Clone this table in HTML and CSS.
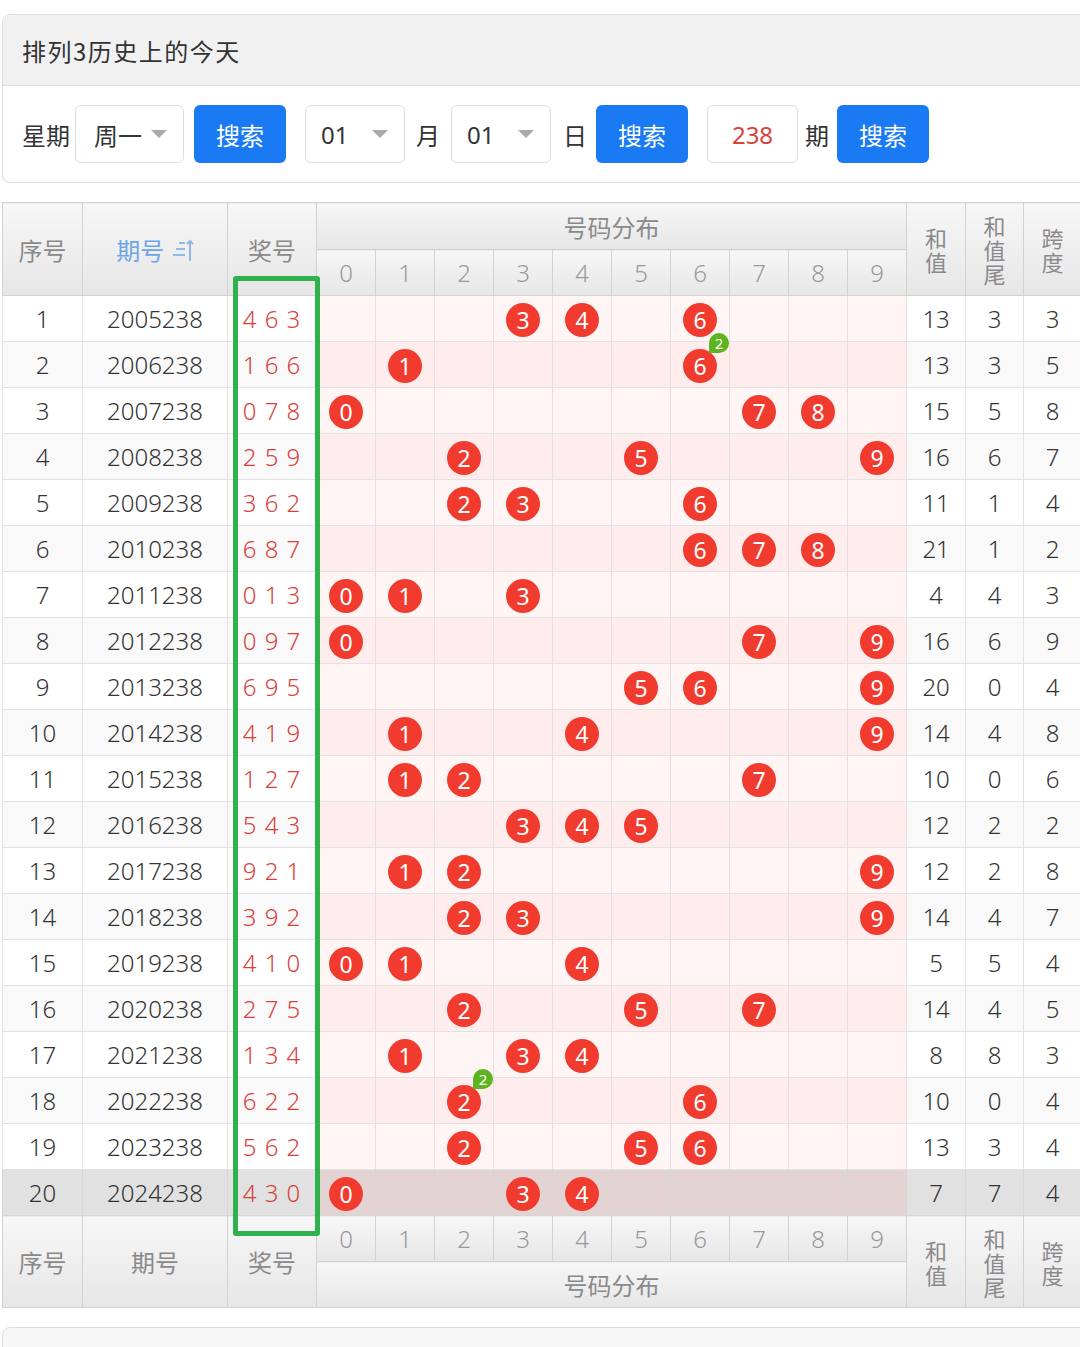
FILE: index.html
```html
<!DOCTYPE html>
<html lang="zh">
<head>
<meta charset="utf-8">
<title>排列3历史上的今天</title>
<link rel="stylesheet" href="styles.css">
</head>
<body>
<div class="page">
  <div class="card">
    <div class="card-head">排列3历史上的今天</div>
    <div class="card-body">
      <span class="lbl lbl-week">星期</span>
      <div class="sel sel-week"><span>周一</span><i class="caret"></i></div>
      <button class="btn btn-1">搜索</button>
      <div class="sel sel-num sel-month"><span>01</span><i class="caret"></i></div>
      <span class="lbl lbl-month">月</span>
      <div class="sel sel-num sel-day"><span>01</span><i class="caret"></i></div>
      <span class="lbl lbl-day">日</span>
      <button class="btn btn-2">搜索</button>
      <div class="inp">238</div>
      <span class="lbl lbl-qi">期</span>
      <button class="btn btn-3">搜索</button>
    </div>
  </div>

  <div class="tbl-wrap">
    <table class="tbl">
      <colgroup>
        <col class="c-idx"><col class="c-issue"><col class="c-win">
        <col class="c-d"><col class="c-d"><col class="c-d"><col class="c-d"><col class="c-d">
        <col class="c-d"><col class="c-d"><col class="c-d"><col class="c-d"><col class="c-d">
        <col class="c-sum"><col class="c-tail"><col class="c-span">
      </colgroup>
      <thead>
        <tr class="h1">
          <th rowspan="2">序号</th>
          <th rowspan="2" class="sortable">期号 <svg class="sort-ic" width="22" height="26" viewBox="0 0 22 26"><g stroke="#8cb9ec" stroke-width="2" fill="none"><line x1="7" y1="5" x2="13" y2="5"/><line x1="4" y1="11" x2="13" y2="11"/><line x1="1" y1="17" x2="13" y2="17"/><line x1="18" y1="3" x2="18" y2="23"/><polyline points="15,6 18,3 21,6"/></g></svg></th>
          <th rowspan="2">奖号</th>
          <th colspan="10">号码分布</th>
          <th rowspan="2" class="vt">和<br>值</th>
          <th rowspan="2" class="vt">和<br>值<br>尾</th>
          <th rowspan="2" class="vt">跨<br>度</th>
        </tr>
        <tr class="h2">
          <th class="dg">0</th><th class="dg">1</th><th class="dg">2</th><th class="dg">3</th><th class="dg">4</th>
          <th class="dg">5</th><th class="dg">6</th><th class="dg">7</th><th class="dg">8</th><th class="dg">9</th>
        </tr>
      </thead>
      <tbody>
        <tr><td>1</td><td>2005238</td><td class="win">4 6 3</td>
          <td class="d"></td><td class="d"></td><td class="d"></td><td class="d"><span class="ball">3</span></td><td class="d"><span class="ball">4</span></td><td class="d"></td><td class="d"><span class="ball">6</span></td><td class="d"></td><td class="d"></td><td class="d"></td>
          <td>13</td><td>3</td><td>3</td></tr>
        <tr><td>2</td><td>2006238</td><td class="win">1 6 6</td>
          <td class="d"></td><td class="d"><span class="ball">1</span></td><td class="d"></td><td class="d"></td><td class="d"></td><td class="d"></td><td class="d"><span class="ball">6<span class="badge">2</span></span></td><td class="d"></td><td class="d"></td><td class="d"></td>
          <td>13</td><td>3</td><td>5</td></tr>
        <tr><td>3</td><td>2007238</td><td class="win">0 7 8</td>
          <td class="d"><span class="ball">0</span></td><td class="d"></td><td class="d"></td><td class="d"></td><td class="d"></td><td class="d"></td><td class="d"></td><td class="d"><span class="ball">7</span></td><td class="d"><span class="ball">8</span></td><td class="d"></td>
          <td>15</td><td>5</td><td>8</td></tr>
        <tr><td>4</td><td>2008238</td><td class="win">2 5 9</td>
          <td class="d"></td><td class="d"></td><td class="d"><span class="ball">2</span></td><td class="d"></td><td class="d"></td><td class="d"><span class="ball">5</span></td><td class="d"></td><td class="d"></td><td class="d"></td><td class="d"><span class="ball">9</span></td>
          <td>16</td><td>6</td><td>7</td></tr>
        <tr><td>5</td><td>2009238</td><td class="win">3 6 2</td>
          <td class="d"></td><td class="d"></td><td class="d"><span class="ball">2</span></td><td class="d"><span class="ball">3</span></td><td class="d"></td><td class="d"></td><td class="d"><span class="ball">6</span></td><td class="d"></td><td class="d"></td><td class="d"></td>
          <td>11</td><td>1</td><td>4</td></tr>
        <tr><td>6</td><td>2010238</td><td class="win">6 8 7</td>
          <td class="d"></td><td class="d"></td><td class="d"></td><td class="d"></td><td class="d"></td><td class="d"></td><td class="d"><span class="ball">6</span></td><td class="d"><span class="ball">7</span></td><td class="d"><span class="ball">8</span></td><td class="d"></td>
          <td>21</td><td>1</td><td>2</td></tr>
        <tr><td>7</td><td>2011238</td><td class="win">0 1 3</td>
          <td class="d"><span class="ball">0</span></td><td class="d"><span class="ball">1</span></td><td class="d"></td><td class="d"><span class="ball">3</span></td><td class="d"></td><td class="d"></td><td class="d"></td><td class="d"></td><td class="d"></td><td class="d"></td>
          <td>4</td><td>4</td><td>3</td></tr>
        <tr><td>8</td><td>2012238</td><td class="win">0 9 7</td>
          <td class="d"><span class="ball">0</span></td><td class="d"></td><td class="d"></td><td class="d"></td><td class="d"></td><td class="d"></td><td class="d"></td><td class="d"><span class="ball">7</span></td><td class="d"></td><td class="d"><span class="ball">9</span></td>
          <td>16</td><td>6</td><td>9</td></tr>
        <tr><td>9</td><td>2013238</td><td class="win">6 9 5</td>
          <td class="d"></td><td class="d"></td><td class="d"></td><td class="d"></td><td class="d"></td><td class="d"><span class="ball">5</span></td><td class="d"><span class="ball">6</span></td><td class="d"></td><td class="d"></td><td class="d"><span class="ball">9</span></td>
          <td>20</td><td>0</td><td>4</td></tr>
        <tr><td>10</td><td>2014238</td><td class="win">4 1 9</td>
          <td class="d"></td><td class="d"><span class="ball">1</span></td><td class="d"></td><td class="d"></td><td class="d"><span class="ball">4</span></td><td class="d"></td><td class="d"></td><td class="d"></td><td class="d"></td><td class="d"><span class="ball">9</span></td>
          <td>14</td><td>4</td><td>8</td></tr>
        <tr><td>11</td><td>2015238</td><td class="win">1 2 7</td>
          <td class="d"></td><td class="d"><span class="ball">1</span></td><td class="d"><span class="ball">2</span></td><td class="d"></td><td class="d"></td><td class="d"></td><td class="d"></td><td class="d"><span class="ball">7</span></td><td class="d"></td><td class="d"></td>
          <td>10</td><td>0</td><td>6</td></tr>
        <tr><td>12</td><td>2016238</td><td class="win">5 4 3</td>
          <td class="d"></td><td class="d"></td><td class="d"></td><td class="d"><span class="ball">3</span></td><td class="d"><span class="ball">4</span></td><td class="d"><span class="ball">5</span></td><td class="d"></td><td class="d"></td><td class="d"></td><td class="d"></td>
          <td>12</td><td>2</td><td>2</td></tr>
        <tr><td>13</td><td>2017238</td><td class="win">9 2 1</td>
          <td class="d"></td><td class="d"><span class="ball">1</span></td><td class="d"><span class="ball">2</span></td><td class="d"></td><td class="d"></td><td class="d"></td><td class="d"></td><td class="d"></td><td class="d"></td><td class="d"><span class="ball">9</span></td>
          <td>12</td><td>2</td><td>8</td></tr>
        <tr><td>14</td><td>2018238</td><td class="win">3 9 2</td>
          <td class="d"></td><td class="d"></td><td class="d"><span class="ball">2</span></td><td class="d"><span class="ball">3</span></td><td class="d"></td><td class="d"></td><td class="d"></td><td class="d"></td><td class="d"></td><td class="d"><span class="ball">9</span></td>
          <td>14</td><td>4</td><td>7</td></tr>
        <tr><td>15</td><td>2019238</td><td class="win">4 1 0</td>
          <td class="d"><span class="ball">0</span></td><td class="d"><span class="ball">1</span></td><td class="d"></td><td class="d"></td><td class="d"><span class="ball">4</span></td><td class="d"></td><td class="d"></td><td class="d"></td><td class="d"></td><td class="d"></td>
          <td>5</td><td>5</td><td>4</td></tr>
        <tr><td>16</td><td>2020238</td><td class="win">2 7 5</td>
          <td class="d"></td><td class="d"></td><td class="d"><span class="ball">2</span></td><td class="d"></td><td class="d"></td><td class="d"><span class="ball">5</span></td><td class="d"></td><td class="d"><span class="ball">7</span></td><td class="d"></td><td class="d"></td>
          <td>14</td><td>4</td><td>5</td></tr>
        <tr><td>17</td><td>2021238</td><td class="win">1 3 4</td>
          <td class="d"></td><td class="d"><span class="ball">1</span></td><td class="d"></td><td class="d"><span class="ball">3</span></td><td class="d"><span class="ball">4</span></td><td class="d"></td><td class="d"></td><td class="d"></td><td class="d"></td><td class="d"></td>
          <td>8</td><td>8</td><td>3</td></tr>
        <tr><td>18</td><td>2022238</td><td class="win">6 2 2</td>
          <td class="d"></td><td class="d"></td><td class="d"><span class="ball">2<span class="badge">2</span></span></td><td class="d"></td><td class="d"></td><td class="d"></td><td class="d"><span class="ball">6</span></td><td class="d"></td><td class="d"></td><td class="d"></td>
          <td>10</td><td>0</td><td>4</td></tr>
        <tr><td>19</td><td>2023238</td><td class="win">5 6 2</td>
          <td class="d"></td><td class="d"></td><td class="d"><span class="ball">2</span></td><td class="d"></td><td class="d"></td><td class="d"><span class="ball">5</span></td><td class="d"><span class="ball">6</span></td><td class="d"></td><td class="d"></td><td class="d"></td>
          <td>13</td><td>3</td><td>4</td></tr>
        <tr class="cur"><td>20</td><td>2024238</td><td class="win">4 3 0</td>
          <td class="d"><span class="ball">0</span></td><td class="d"></td><td class="d"></td><td class="d"><span class="ball">3</span></td><td class="d"><span class="ball">4</span></td><td class="d"></td><td class="d"></td><td class="d"></td><td class="d"></td><td class="d"></td>
          <td>7</td><td>7</td><td>4</td></tr>
      </tbody>
      <tfoot>
        <tr class="f1">
          <th rowspan="2">序号</th>
          <th rowspan="2">期号</th>
          <th rowspan="2">奖号</th>
          <th class="dg">0</th><th class="dg">1</th><th class="dg">2</th><th class="dg">3</th><th class="dg">4</th>
          <th class="dg">5</th><th class="dg">6</th><th class="dg">7</th><th class="dg">8</th><th class="dg">9</th>
          <th rowspan="2" class="vt">和<br>值</th>
          <th rowspan="2" class="vt">和<br>值<br>尾</th>
          <th rowspan="2" class="vt">跨<br>度</th>
        </tr>
        <tr class="f2">
          <th colspan="10">号码分布</th>
        </tr>
      </tfoot>
    </table>
    <div class="hl"></div>
  </div>

  <div class="card card-next"></div>
</div>
</body>
</html>
```

FILE: styles.css
```css
html { overflow-x: hidden; }
body {
  margin: 0;
  background: #fff;
  color: #333;
  font-family: "Noto Sans", "Noto Sans CJK SC", sans-serif;
}
.page {
  padding: 14px 0 0 2px;
  width: 1110px;
}

/* top card */
.card {
  border: 1px solid #ddd;
  border-radius: 8px;
  background: #fff;
  overflow: hidden;
}
.card-head {
  height: 70px;
  background: #f1f1f1;
  border-bottom: 1px solid #ddd;
  display: flex;
  align-items: center;
  padding-left: 19px;
  font-family: "Noto Sans CJK SC", sans-serif;
  font-size: 24px;
  letter-spacing: 1.5px;
  color: #333;
}
.card-body {
  display: flex;
  align-items: center;
  height: 58px;
  padding: 19px 0 19px 19px;
}
.lbl {
  font-family: "Noto Sans CJK SC", sans-serif;
  font-size: 24px;
  color: #333;
}
.sel {
  box-sizing: border-box;
  height: 58px;
  border: 1px solid #ddd;
  border-radius: 6px;
  display: flex;
  align-items: center;
  justify-content: space-between;
  font-size: 24px;
  color: #333;
  font-family: "Noto Sans", "Noto Sans CJK SC", sans-serif;
}
.sel-week { width: 109px; margin-left: 5px; padding: 0 16px 0 18px; }
.sel-num { width: 100px; padding: 0 16px 0 15px; }
.sel-month { margin-left: 19px; }
.sel-day { margin-left: 11px; }
.caret {
  width: 0;
  height: 0;
  border-left: 8px solid transparent;
  border-right: 8px solid transparent;
  border-top: 8px solid #aaa;
}
.btn {
  width: 92px;
  height: 58px;
  border: 0;
  border-radius: 6px;
  background: #1a7af4;
  color: #fff;
  font-family: "Noto Sans CJK SC", sans-serif;
  font-size: 24px;
  padding: 0;
}
.btn-1 { margin-left: 10px; }
.btn-2 { margin-left: 9px; }
.btn-3 { margin-left: 8px; }
.lbl-month { margin-left: 11px; }
.lbl-day { margin-left: 12px; }
.lbl-qi { margin-left: 7px; }
.inp {
  box-sizing: border-box;
  width: 91px;
  height: 58px;
  margin-left: 19px;
  border: 1px solid #ddd;
  border-radius: 6px;
  display: flex;
  align-items: center;
  justify-content: center;
  font-size: 24px;
  color: #d9413b;
}

/* table */
.tbl-wrap {
  position: relative;
  margin-top: 19px;
}
.tbl {
  border-collapse: collapse;
  table-layout: fixed;
  width: 1079px;
  font-size: 24px;
}
.c-idx { width: 80px; }
.c-issue { width: 145px; }
.c-win { width: 89px; }
.c-d { width: 59px; }
.c-sum { width: 59px; }
.c-tail { width: 58px; }
.c-span { width: 58px; }

.tbl th,
.tbl td {
  padding: 0;
  text-align: center;
  vertical-align: middle;
  white-space: nowrap;
}
.tbl th {
  border: 1px solid #d2d2d2;
  background: linear-gradient(#f7f7f7, #e6e6e6);
  color: #8a8a8a;
  font-weight: normal;
  font-family: "Noto Sans CJK SC", sans-serif;
  font-size: 24px;
}
.tbl th.dg {
  font-family: "Noto Sans", sans-serif;
  font-weight: 300;
  color: #999;
  font-size: 24px;
}
.tbl th.vt {
  font-size: 22px;
  line-height: 24px;
}
.tbl thead .h1 { height: 47px; }
.tbl thead .h2 { height: 46px; }
.tbl tfoot .f1 { height: 46px; }
.tbl tfoot .f2 { height: 46px; }
.sortable { color: #6ea5e6 !important; }
.sort-ic { vertical-align: -4px; margin-left: 2px; }

.tbl tbody tr { height: 46px; }
.tbl td {
  border: 1px solid #e2e2e2;
  background: #fff;
  color: #333;
  font-weight: 300;
}
.tbl tbody tr:nth-child(even) td { background: #f9f9f9; }
.tbl td.d { background: #fff5f5; }
.tbl tbody tr:nth-child(even) td.d { background: #ffecec; }
.tbl tbody tr.cur td { background: #e1e1e1; border-color: #d6d6d6; }
.tbl tbody tr.cur td.d { background: #e3d3d3; }
.tbl td.win {
  color: #d9403a;
  letter-spacing: 1px;
}

.ball {
  position: relative;
  display: inline-block;
  width: 34px;
  height: 34px;
  border-radius: 50%;
  background: #f13b2f;
  color: #fff;
  font-size: 23px;
  line-height: 34px;
  text-align: center;
  vertical-align: middle;
  font-weight: normal;
}
.badge {
  position: absolute;
  left: 26px;
  top: -16px;
  width: 20px;
  height: 20px;
  border-radius: 50% 50% 50% 0;
  background: #5db41e;
  color: #fff;
  font-size: 15px;
  line-height: 20px;
  text-align: center;
}

.hl {
  position: absolute;
  left: 231px;
  top: 74px;
  width: 87px;
  height: 960px;
  box-sizing: border-box;
  border: 5px solid #2fb24b;
  border-radius: 3px;
  pointer-events: none;
}

.card-next {
  margin-top: 19px;
  height: 60px;
  background: #f7f7f7;
}
```
